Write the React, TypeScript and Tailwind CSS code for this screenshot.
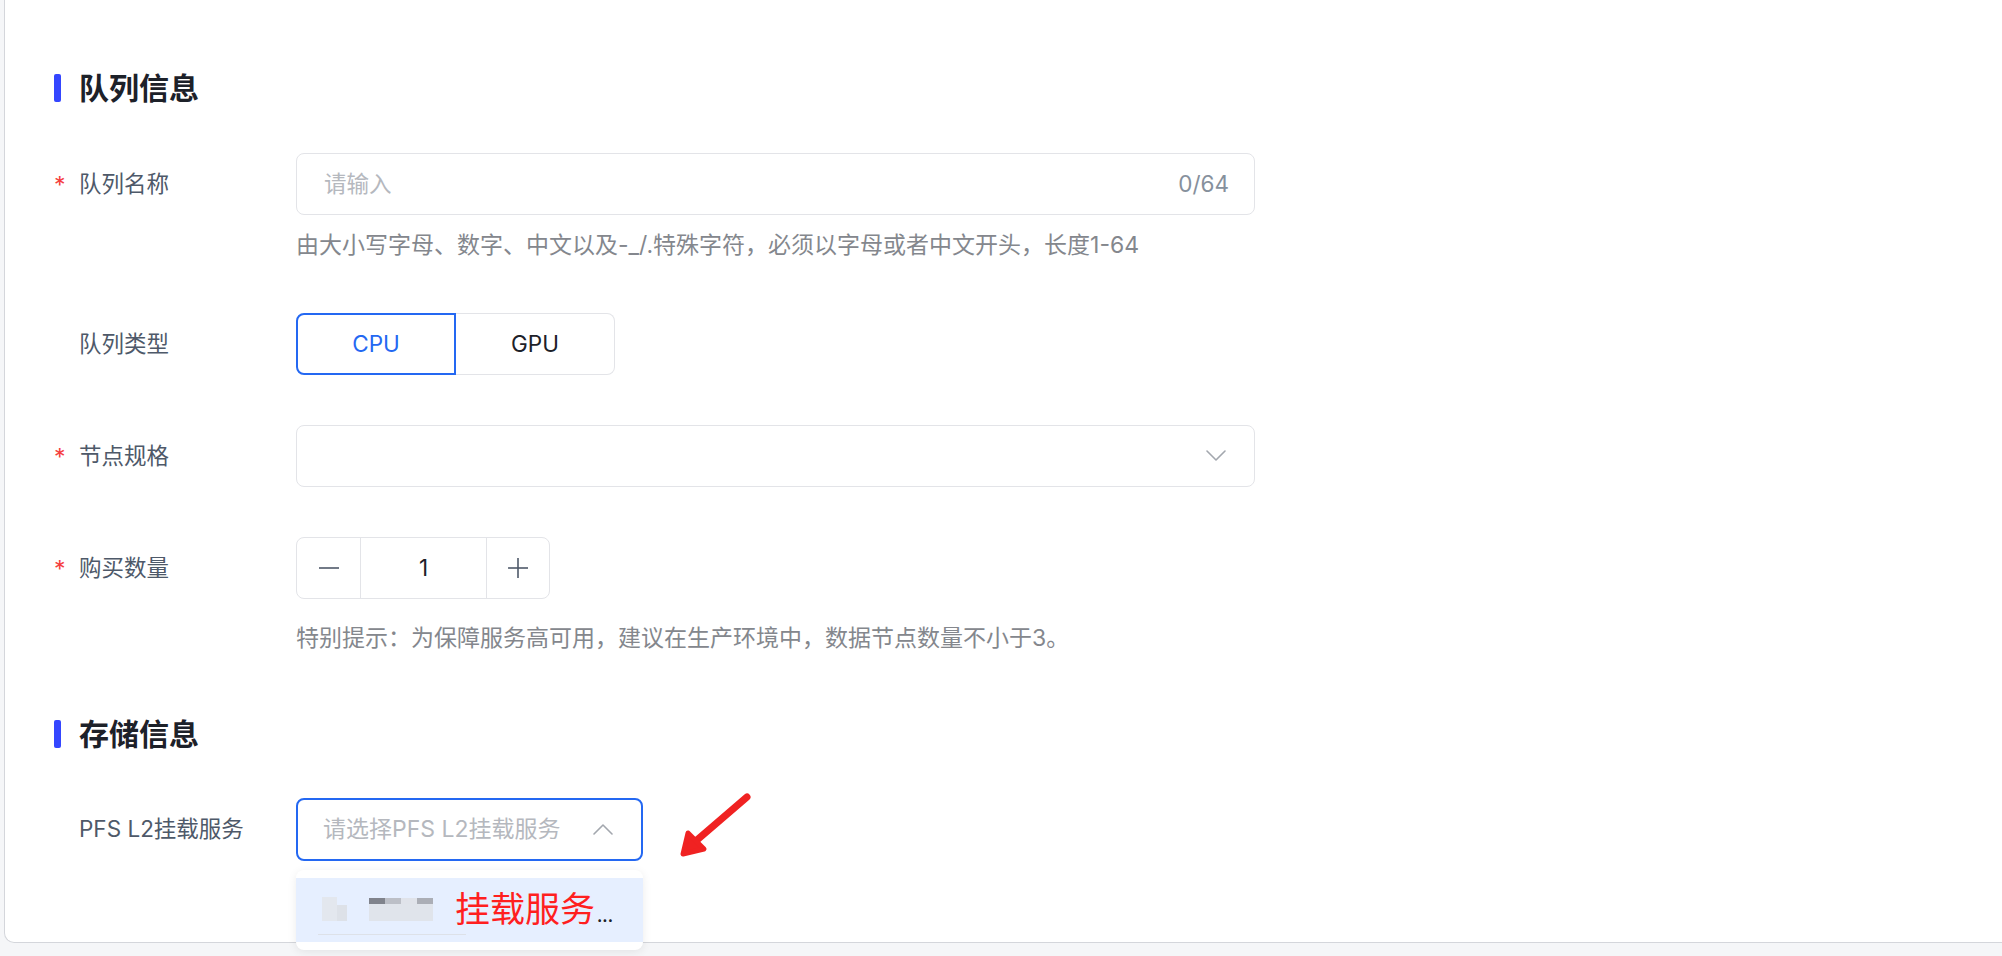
import { type ReactNode } from "react";

function SectionTitle({ title }: { title: string }) {
  return (
    <div className="flex h-[40px] items-center">
      <span className="h-[28px] w-[7px] rounded-[2px] bg-[#3446ff]" />
      <h2 className="ml-[18px] text-[30px] font-semibold leading-none text-[#1d2129]">
        {title}
      </h2>
    </div>
  );
}

function FormRow({
  label,
  required,
  children,
}: {
  label: string;
  required?: boolean;
  children: ReactNode;
}) {
  return (
    <div className="flex h-[62px] items-center">
      <div className="flex w-[242px] shrink-0 items-center text-[22.5px] text-[#4e5969]">
        <span className="w-[25px] pt-[2px] text-[23px] leading-none text-[#f53f3f]">
          {required ? "*" : ""}
        </span>
        <span>{label}</span>
      </div>
      {children}
    </div>
  );
}

function Chevron({ up }: { up?: boolean }) {
  return (
    <svg width="20" height="12" viewBox="0 0 20 12" fill="none">
      <polyline
        points={up ? "1,11 10,2 19,11" : "1,1 10,10 19,1"}
        stroke="#a3a7ae"
        strokeWidth="1.6"
        strokeLinecap="round"
        strokeLinejoin="round"
      />
    </svg>
  );
}

function App() {
  return (
    <div className="relative h-[956px] w-full overflow-hidden bg-[#f5f6f8] font-['Inter','Noto_Sans_CJK_SC',sans-serif]">
      <div className="ml-[4px] h-[943px] rounded-bl-[10px] border-b border-l border-[#d4d6db] bg-white pl-[49px] pt-[68px]">
        {/* 队列信息 */}
        <SectionTitle title="队列信息" />

        <div className="mt-[45px]">
          <FormRow label="队列名称" required>
            <div className="flex h-full w-[959px] items-center justify-between rounded-[8px] border border-[#e3e4e8] pl-[27px] pr-[25px] text-[22.5px]">
              <span className="text-[#b5b8be]">请输入</span>
              <span className="text-[#86909c]">0/64</span>
            </div>
          </FormRow>
        </div>
        <p className="mt-[15px] pl-[242px] text-[23px] leading-[30px] text-[#84878d]">
          由大小写字母、数字、中文以及-_/.特殊字符，必须以字母或者中文开头，长度1-64
        </p>

        <div className="mt-[53px]">
          <FormRow label="队列类型">
            <div className="flex h-full text-[22.5px]">
              <button className="w-[160px] rounded-l-[8px] border-2 border-[#2468f2] text-[#2468f2]">
                CPU
              </button>
              <button className="w-[159px] rounded-r-[8px] border border-l-0 border-[#e3e4e8] text-[#1d2129]">
                GPU
              </button>
            </div>
          </FormRow>
        </div>

        <div className="mt-[50px]">
          <FormRow label="节点规格" required>
            <div className="flex h-full w-[959px] items-center justify-end rounded-[8px] border border-[#e3e4e8] pr-[28px]">
              <Chevron />
            </div>
          </FormRow>
        </div>

        <div className="mt-[50px]">
          <FormRow label="购买数量" required>
            <div className="flex h-full w-[254px] rounded-[8px] border border-[#e3e4e8] text-[22.5px] text-[#1d2129]">
              <div className="flex w-[64px] items-center justify-center border-r border-[#e3e4e8]">
                <svg width="22" height="22" viewBox="0 0 22 22">
                  <line x1="1" y1="11" x2="21" y2="11" stroke="#4e5969" strokeWidth="1.6" />
                </svg>
              </div>
              <div className="flex w-[125px] items-center justify-center">1</div>
              <div className="flex flex-1 items-center justify-center border-l border-[#e3e4e8]">
                <svg width="22" height="22" viewBox="0 0 22 22">
                  <line x1="1" y1="11" x2="21" y2="11" stroke="#4e5969" strokeWidth="1.6" />
                  <line x1="11" y1="1" x2="11" y2="21" stroke="#4e5969" strokeWidth="1.6" />
                </svg>
              </div>
            </div>
          </FormRow>
        </div>
        <p className="mt-[24px] pl-[242px] text-[23px] leading-[30px] text-[#84878d]">
          特别提示：为保障服务高可用，建议在生产环境中，数据节点数量不小于3。
        </p>

        {/* 存储信息 */}
        <div className="mt-[61px]">
          <SectionTitle title="存储信息" />
        </div>

        <div className="mt-[44px]">
          <FormRow label="PFS L2挂载服务">
            <div className="relative h-[63px] w-[347px]">
              <div className="flex h-full items-center justify-between rounded-[8px] border-2 border-[#2468f2] pl-[25px] pr-[28px] text-[23px] text-[#b5b8be]">
                <span>请选择PFS L2挂载服务</span>
                <Chevron up />
              </div>

              {/* dropdown */}
              <div className="absolute left-0 top-[72px] z-10 w-full rounded-[8px] bg-white py-[8px] shadow-[0_2px_10px_rgba(0,0,0,0.08)]">
                <div className="relative flex h-[64px] items-center bg-[#e6efff]">
                  <svg
                    className="absolute left-[20px] top-[14px]"
                    width="150"
                    height="46"
                    viewBox="0 0 150 46"
                  >
                    <rect x="6" y="5" width="15" height="24" fill="#e3e7ee" />
                    <rect x="21" y="13" width="10" height="16" fill="#dde1e8" />
                    <rect x="53" y="12" width="64" height="17" fill="#e0e4eb" />
                    <rect x="53" y="6" width="16" height="6" fill="#80838c" />
                    <rect x="69" y="6" width="16" height="6" fill="#bcbfc7" />
                    <rect x="85" y="6" width="16" height="6" fill="#e0e3ea" />
                    <rect x="101" y="6" width="16" height="6" fill="#abaeb6" />
                    <rect x="2" y="42" width="205" height="1" fill="#dde1e8" />
                  </svg>
                  <span className="relative ml-[159px] text-[35px] leading-none text-[#ff1f1f]">
                    挂载服务
                  </span>
                  <span className="relative ml-[2px] mt-[12px] text-[16px] font-bold leading-none text-[#1d2129]">
                    ...
                  </span>
                </div>
              </div>
            </div>
          </FormRow>
        </div>
      </div>

      {/* annotation arrow */}
      <svg
        className="absolute left-[676px] top-[790px]"
        width="80"
        height="70"
        viewBox="0 0 80 70"
        fill="none"
      >
        <line x1="71" y1="7" x2="14" y2="56" stroke="#f02222" strokeWidth="7" strokeLinecap="round" />
        <polygon
          points="7,64 12,43 28,59"
          fill="#f02222"
          stroke="#f02222"
          strokeWidth="5"
          strokeLinejoin="round"
        />
      </svg>
    </div>
  );
}

export default App;
